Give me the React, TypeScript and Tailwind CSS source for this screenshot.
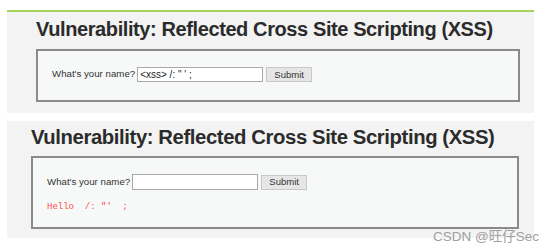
import React from 'react'

const sans = { fontFamily: '"Liberation Sans", Arial, sans-serif' }
const mono = { fontFamily: '"Liberation Mono", "Courier New", monospace' }

function NameForm({ value, small }: { value: string; small?: boolean }) {
    return (
        <div className="flex items-center" style={sans}>
            <span className="text-[9.7px] text-[#333] whitespace-nowrap">What's your name?</span>
            <div className={`ml-[2px] w-[126px] border border-[#a9a9a9] bg-white px-[2px] text-[10px] leading-none text-[#222] whitespace-pre ${small ? 'h-[15px] pt-[2px]' : 'h-[16px] pt-[3px]'}`}>
                {value}
            </div>
            <button className="ml-[3px] h-[15px] w-[46px] border border-[#c8c8c8] bg-[#e6e6e6] text-[9.5px] leading-none text-[#333]">
                Submit
            </button>
        </div>
    )
}

export default function App() {
    return (
        <div className="relative h-[252px] w-[554px] bg-white pt-[10px]" style={sans}>
            <div className="ml-[7px] w-[527px] h-[103px] border-t-2 border-[#a6d35a] bg-[#f3f3f3] pl-[29px] pt-[7px]">
                <h1 className="text-[20px] font-bold leading-[21px] text-[#2b2b2b] tracking-[-0.4px]">
                    Vulnerability: Reflected Cross Site Scripting (XSS)
                </h1>
                <div className="mt-[9px] w-[484px] h-[53px] border-2 border-[#8a8a8a] bg-[#f7f8f8] pl-[14px] pt-[16px]">
                    <NameForm value={'<xss> /: " \' ;'} small />
                </div>
            </div>
            <div className="mt-[8px] ml-[7px] w-[527px] h-[117px] bg-[#f3f3f3] pl-[24px] pt-[6px]">
                <h1 className="text-[20.3px] font-bold leading-[21px] text-[#2b2b2b] tracking-[-0.4px]">
                    Vulnerability: Reflected Cross Site Scripting (XSS)
                </h1>
                <div className="mt-[8px] w-[488px] h-[73px] border-2 border-[#8a8a8a] bg-[#f7f8f8] pl-[14px] pt-[16px]">
                    <NameForm value="" />
                    <div className="mt-[13px] text-[9px] leading-none text-[#ff4b4b] whitespace-pre" style={mono}>
                        {'Hello  /: "\'  ;'}
                    </div>
                </div>
            </div>
            <div className="absolute right-[15px] bottom-[9px] text-[13.5px] leading-none text-[#a0a0a0]" style={{ fontFamily: '"Liberation Sans", "Noto Sans CJK SC", sans-serif' }}>
                CSDN @旺仔Sec
            </div>
        </div>
    )
}
